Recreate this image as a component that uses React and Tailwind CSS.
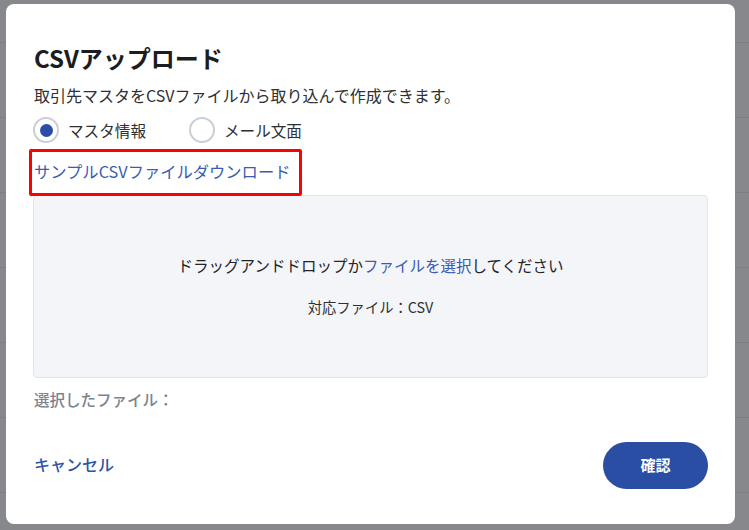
import React from "react";

const FONT = { fontFamily: '"Noto Sans CJK JP", "Noto Sans", "Liberation Sans", sans-serif' };

function Radio({ checked, label }) {
  return (
    <label className="flex items-center">
      <span className="flex h-[26px] w-[26px] items-center justify-center rounded-full border-2 border-[#c9cfd9] bg-white">
        {checked && <span className="h-[13px] w-[13px] rounded-full bg-[#2b4ea6]" />}
      </span>
      <span className="ml-[9px] text-[15.6px] leading-[24px] text-[#2e3033]">{label}</span>
    </label>
  );
}

export default function App() {
  const rows = [0, 1, 2, 3, 4, 5, 6];
  return (
    <div className="relative h-[530px] w-[749px] overflow-hidden bg-[#86888b]" style={FONT}>
      {/* background page (dimmed) */}
      <div className="flex flex-col pt-[42px]">
        {rows.map((r) => (
          <div key={r} className="h-[75px] border-t border-[#7c7e82]" />
        ))}
      </div>

      {/* modal */}
      <div className="absolute left-[6px] top-[4px] flex h-[520px] w-[729px] flex-col rounded-[8px] bg-white px-[27px] pb-[35px] pt-[38px]">
        <h2 className="pl-[1px] text-[24px] font-bold leading-[32px] text-[#1b1d21]">CSVアップロード</h2>
        <p className="mt-[9px] pl-[1px] text-[16px] leading-[24px] text-[#2e3033]">
          取引先マスタをCSVファイルから取り込んで作成できます。
        </p>
        <div className="mt-[10px] flex items-center gap-[43px]">
          <Radio checked label="マスタ情報" />
          <Radio label="メール文面" />
        </div>
        <div className="mt-[16px] flex">
          <div className="relative pl-[1px]">
            <span className="text-[16.3px] leading-[22px] text-[#3a5cb3]">サンプルCSVファイルダウンロード</span>
            <div className="absolute left-[-4px] top-[-10px] h-[47px] w-[273px] rounded-[2px] border-[3px] border-[#ff0000]" />
          </div>
        </div>
        <div className="mt-[12px] flex h-[183px] flex-col items-center justify-center rounded-[4px] border border-[#e1e4ea] bg-[#f4f5f9] pb-[4px]">
          <p className="text-[15.5px] leading-[24px] text-[#222427]">
            ドラッグアンドドロップか<span className="text-[#3a5cb3]">ファイルを選択</span>してください
          </p>
          <p className="mt-[20px] text-[14.3px] leading-[20px] text-[#2e3033]">対応ファイル：CSV</p>
        </div>
        <p className="mt-[10px] pl-[1px] text-[15.5px] font-medium leading-[22px] text-[#7a8390]">選択したファイル：</p>
        <div className="mt-auto flex items-center justify-between">
          <span className="mb-[3px] pl-[1px] text-[16px] font-medium leading-[22px] text-[#2f54a8]">キャンセル</span>
          <button className="flex h-[47px] w-[105px] items-center justify-center rounded-full bg-[#2a4ea3] text-[15px] font-bold text-white">
            確認
          </button>
        </div>
      </div>
    </div>
  );
}
